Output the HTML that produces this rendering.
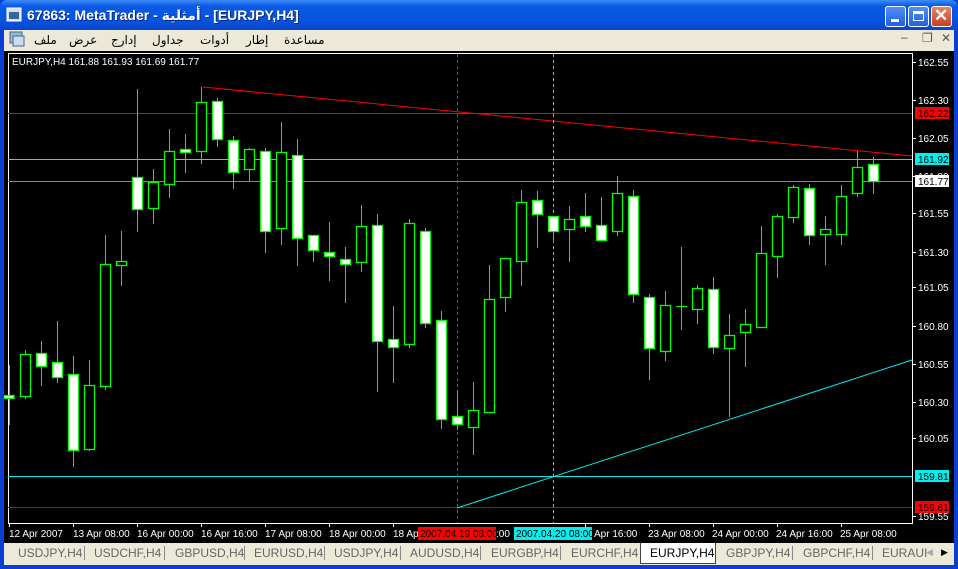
<!DOCTYPE html>
<html><head><meta charset="utf-8"><style>
*{margin:0;padding:0;box-sizing:border-box}
body{width:958px;height:569px;overflow:hidden;background:#0a3fd6;font-family:"Liberation Sans","Noto Sans CJK SC",sans-serif;position:relative}
.title{position:absolute;left:0;top:0;width:958px;height:30px;background:linear-gradient(#3d8cf7,#0a5ae6 20%,#0553e0 70%,#0a44c8);border-radius:7px 7px 0 0}
.title .t{position:absolute;left:27px;top:7px;color:#fff;font:bold 14px "Liberation Sans","DejaVu Sans",sans-serif;text-shadow:1px 1px #0a2a80}
.btn{position:absolute;top:6px;width:21px;height:21px;border:1px solid #fff;border-radius:3px;background:linear-gradient(#4f8ff7,#2160e0)}
.menu{position:absolute;left:4px;top:30px;width:950px;height:21px;background:#ece9d8;font:12px "Liberation Sans","DejaVu Sans",sans-serif}
.menu span{position:absolute;top:3px}
.tabs{position:absolute;left:4px;top:543px;width:950px;height:22px;background:#ece9d8;font:12px "Liberation Sans",sans-serif;color:#666}
.tabs span{position:absolute;top:3px}
.sep{position:absolute;top:3px;width:1px;height:14px;background:#888}
</style></head><body>
<div class="title"><svg style="position:absolute;left:6px;top:7px" width="16" height="16"><rect x="1" y="1" width="14" height="13" fill="#dde" stroke="#fff"/><rect x="3" y="5" width="10" height="7" fill="#369"/></svg><div class="t">67863: MetaTrader - أمثلية - [EURJPY,H4]</div>
<div class="btn" style="left:885px"><div style="position:absolute;left:5px;top:12px;width:8px;height:3px;background:#fff"></div></div>
<div class="btn" style="left:908px"><div style="position:absolute;left:4px;top:4px;width:11px;height:10px;border:1px solid #fff;border-top:3px solid #fff"></div></div>
<div class="btn" style="left:931px;background:linear-gradient(#e8836a,#c8401c)"><div style="position:absolute;left:2px;top:-1px;color:#fff;font:bold 17px sans-serif">✕</div></div>
</div>
<div class="menu">
<svg style="position:absolute;left:5px;top:1px" width="16" height="17"><rect x="1" y="1" width="12" height="11" fill="#9bc" stroke="#469"/><rect x="4" y="5" width="11" height="10" fill="#cde" stroke="#469"/></svg>
<span style="left:30px">ملف</span><span style="left:65px">عرض</span><span style="left:107px">إدارج</span><span style="left:148px">جداول</span><span style="left:196px">أدوات</span><span style="left:242px">إطار</span><span style="left:280px">مساعدة</span>
<span style="left:897px;top:0;color:#555">–</span><span style="left:918px;top:1px;color:#555">❐</span><span style="left:937px;top:1px;color:#555">✕</span>
</div>
<svg style="position:absolute;left:4px;top:51px" width="950" height="492" viewBox="4 51 950 492">
<rect x="4" y="51" width="950" height="492" fill="#000"/>
<rect x="8.5" y="53.5" width="904" height="470" fill="none" stroke="#fff"/>
<g font-family="Liberation Sans" font-size="10" fill="#fff">
<text x="12" y="65">EURJPY,H4  161.88 161.93 161.69 161.77</text>
</g>
<line x1="8" y1="113.5" x2="912" y2="113.5" stroke="#f00"/>
<line x1="8" y1="159.5" x2="912" y2="159.5" stroke="#0ee"/>
<line x1="8" y1="181.5" x2="912" y2="181.5" stroke="#888"/>
<line x1="8" y1="476.5" x2="912" y2="476.5" stroke="#0ee"/>
<line x1="8" y1="507.5" x2="912" y2="507.5" stroke="#d00"/>
<line x1="203" y1="87" x2="912" y2="156" stroke="#f00"/>
<line x1="457" y1="508" x2="912" y2="360" stroke="#0ee"/>
<line x1="457.5" y1="54" x2="457.5" y2="523" stroke="#c33" stroke-dasharray="3,3"/>
<line x1="553.5" y1="54" x2="553.5" y2="523" stroke="#4dd" stroke-dasharray="3,3"/>
<g stroke="#0f0" stroke-width="1">
<!-- cx, wickTop, wickBot, bodyTop, bodyBot, fill -->
<path d="M9.5 365V425M25.5 350V399M41.5 341V386M57.5 321V383M73.5 356V467M89.5 360V451M105.5 235V390M121.5 231V286M137.5 89V232M153.5 169V224M169.5 129V198M185.5 134V173M201.5 87V164M217.5 98V147M233.5 136V189M249.5 148V181M265.5 148V253M281.5 122V245M297.5 139V266M313.5 235V262M329.5 222V281M345.5 247V303M361.5 205V272M377.5 214V392M393.5 306V383M409.5 219V348M425.5 228V328M441.5 311V429M457.5 390V430M473.5 382V455M489.5 265V412M505.5 258V312M521.5 190V286M537.5 191V248M553.5 216V243M569.5 206V262M585.5 193V232M601.5 197V240M617.5 176V236M633.5 190V303M649.5 294V380M665.5 291V361M681.5 247V330M697.5 285V324M713.5 277V354M729.5 314V417M745.5 309V367M761.5 226V327M777.5 214V278M793.5 185V223M809.5 184V245M825.5 216V265M841.5 185V245M857.5 151V197M873.5 157V194M676 306.5H687"/>
</g>
<g stroke="#0f0" stroke-width="1.3">
<rect x="4" y="395.5" width="10" height="3" fill="#fff"/>
<rect x="20.5" y="354.5" width="10" height="42"/>
<rect x="36.5" y="353.5" width="10" height="13" fill="#fff"/>
<rect x="52.5" y="362.5" width="10" height="15" fill="#fff"/>
<rect x="68.5" y="374.5" width="10" height="76" fill="#fff"/>
<rect x="84.5" y="385.5" width="10" height="64"/>
<rect x="100.5" y="264.5" width="10" height="122"/>
<rect x="116.5" y="261.5" width="10" height="4"/>
<rect x="132.5" y="177.5" width="10" height="32" fill="#fff"/>
<rect x="148.5" y="182.5" width="10" height="26"/>
<rect x="164.5" y="151.5" width="10" height="33"/>
<rect x="180.5" y="149.5" width="10" height="3" fill="#fff"/>
<rect x="196.5" y="102.5" width="10" height="49"/>
<rect x="212.5" y="101.5" width="10" height="38" fill="#fff"/>
<rect x="228.5" y="140.5" width="10" height="32" fill="#fff"/>
<rect x="244.5" y="149.5" width="10" height="20"/>
<rect x="260.5" y="151.5" width="10" height="80" fill="#fff"/>
<rect x="276.5" y="152.5" width="10" height="76"/>
<rect x="292.5" y="155.5" width="10" height="83" fill="#fff"/>
<rect x="308.5" y="235.5" width="10" height="15" fill="#fff"/>
<rect x="324.5" y="252.5" width="10" height="4" fill="#fff"/>
<rect x="340.5" y="259.5" width="10" height="5" fill="#fff"/>
<rect x="356.5" y="226.5" width="10" height="36"/>
<rect x="372.5" y="225.5" width="10" height="116" fill="#fff"/>
<rect x="388.5" y="339.5" width="10" height="8" fill="#fff"/>
<rect x="404.5" y="223.5" width="10" height="121"/>
<rect x="420.5" y="231.5" width="10" height="92" fill="#fff"/>
<rect x="436.5" y="320.5" width="10" height="99" fill="#fff"/>
<rect x="452.5" y="416.5" width="10" height="8" fill="#fff"/>
<rect x="468.5" y="410.5" width="10" height="17"/>
<rect x="484.5" y="299.5" width="10" height="113"/>
<rect x="500.5" y="258.5" width="10" height="39"/>
<rect x="516.5" y="202.5" width="10" height="59"/>
<rect x="532.5" y="200.5" width="10" height="14" fill="#fff"/>
<rect x="548.5" y="216.5" width="10" height="15" fill="#fff"/>
<rect x="564.5" y="219.5" width="10" height="10"/>
<rect x="580.5" y="216.5" width="10" height="10" fill="#fff"/>
<rect x="596.5" y="225.5" width="10" height="15" fill="#fff"/>
<rect x="612.5" y="193.5" width="10" height="38"/>
<rect x="628.5" y="196.5" width="10" height="98" fill="#fff"/>
<rect x="644.5" y="297.5" width="10" height="51" fill="#fff"/>
<rect x="660.5" y="305.5" width="10" height="46"/>
<rect x="692.5" y="288.5" width="10" height="21"/>
<rect x="708.5" y="289.5" width="10" height="58" fill="#fff"/>
<rect x="724.5" y="335.5" width="10" height="13"/>
<rect x="740.5" y="324.5" width="10" height="8"/>
<rect x="756.5" y="253.5" width="10" height="74"/>
<rect x="772.5" y="216.5" width="10" height="40"/>
<rect x="788.5" y="187.5" width="10" height="30"/>
<rect x="804.5" y="188.5" width="10" height="47" fill="#fff"/>
<rect x="820.5" y="229.5" width="10" height="5"/>
<rect x="836.5" y="196.5" width="10" height="38"/>
<rect x="852.5" y="167.5" width="10" height="26"/>
<rect x="868.5" y="164.5" width="10" height="17" fill="#fff"/>
</g>
<g stroke="#fff"><path d="M912 62.5h4M912 100.5h4M912 138.5h4M912 176.5h4M912 213.5h4M912 252.5h4M912 287.5h4M912 326.5h4M912 364.5h4M912 402.5h4M912 438.5h4M912 516.5h4M9.5 523v4M73.5 523v4M137.5 523v4M201.5 523v4M265.5 523v4M329.5 523v4M393.5 523v4M585.5 523v4M649.5 523v4M713.5 523v4M777.5 523v4M841.5 523v4"/></g>
<g font-family="Liberation Sans" font-size="10" fill="#fff">
<text x="918" y="66">162.55</text><text x="918" y="104">162.30</text><text x="918" y="142">162.05</text><text x="918" y="180">161.80</text><text x="918" y="217">161.55</text><text x="918" y="256">161.30</text><text x="918" y="291">161.05</text><text x="918" y="330">160.80</text><text x="918" y="368">160.55</text><text x="918" y="406">160.30</text><text x="918" y="442">160.05</text><text x="918" y="520">159.55</text>
</g>
<rect x="915" y="107" width="34" height="12" fill="#f00"/><rect x="915" y="153" width="34" height="12" fill="#0ee"/><rect x="915" y="175" width="34" height="12" fill="#fff"/><rect x="915" y="470" width="34" height="12" fill="#0ee"/><rect x="915" y="501" width="34" height="12" fill="#f00"/>
<g font-family="Liberation Sans" font-size="10" fill="#000"><text x="918" y="117">162.22</text><text x="918" y="163">161.92</text><text x="918" y="185">161.77</text><text x="918" y="480">159.81</text><text x="918" y="511">159.61</text></g>
<g font-family="Liberation Sans" font-size="10" fill="#fff">
<text x="9" y="537">12 Apr 2007</text><text x="73" y="537">13 Apr 08:00</text><text x="137" y="537">16 Apr 00:00</text><text x="201" y="537">16 Apr 16:00</text><text x="265" y="537">17 Apr 08:00</text><text x="329" y="537">18 Apr 00:00</text><text x="393" y="537">18 Apr</text><text x="496" y="537">:00</text><text x="594" y="537">Apr 16:00</text><text x="648" y="537">23 Apr 08:00</text><text x="712" y="537">24 Apr 00:00</text><text x="776" y="537">24 Apr 16:00</text><text x="840" y="537">25 Apr 08:00</text>
</g>
<rect x="418" y="527" width="78" height="13" fill="#f00"/><rect x="514" y="527" width="78" height="13" fill="#0ee"/>
<g font-family="Liberation Sans" font-size="10" fill="#000"><text x="420" y="537">2007.04.19 08:00</text><text x="516" y="537">2007.04.20 08:00</text></g>
</svg>
<div class="tabs">
<span style="left:14px">USDJPY,H4</span><div class="sep" style="left:80px"></div>
<span style="left:90px">USDCHF,H4</span><div class="sep" style="left:160px"></div>
<span style="left:171px">GBPUSD,H4</span><div class="sep" style="left:240px"></div>
<span style="left:250px">EURUSD,H4</span><div class="sep" style="left:320px"></div>
<span style="left:330px">USDJPY,H4</span><div class="sep" style="left:396px"></div>
<span style="left:406px">AUDUSD,H4</span><div class="sep" style="left:476px"></div>
<span style="left:487px">EURGBP,H4</span><div class="sep" style="left:556px"></div>
<span style="left:567px">EURCHF,H4</span>
<div style="position:absolute;left:636px;top:0;width:76px;height:21px;background:#fff;border:1px solid #444;border-top:none"></div>
<span style="left:646px;color:#000">EURJPY,H4</span>
<span style="left:722px">GBPJPY,H4</span><div class="sep" style="left:788px"></div>
<span style="left:799px">GBPCHF,H4</span><div class="sep" style="left:868px"></div>
<span style="left:878px">EURAUI</span>
<span style="left:922px;font-size:9px;top:4px;color:#aaa">◀</span><span style="left:937px;font-size:9px;top:4px;color:#000">▶</span>
</div>
</body></html>
